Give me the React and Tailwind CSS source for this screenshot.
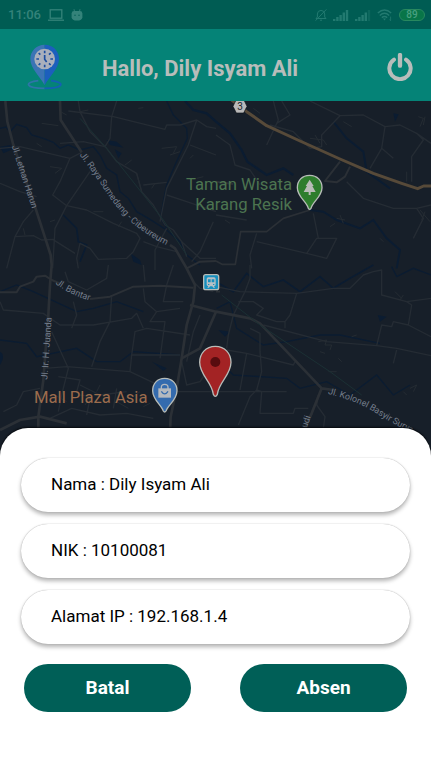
import React from "react";

function Laptop() {
  return (
    <svg className="h-3 w-4" viewBox="0 0 16 12" fill="none" stroke="currentColor" strokeWidth="1.3" aria-hidden="true">
      <rect x="2.2" y="0.8" width="11.6" height="8.4" />
      <path d="M0 11.2H16" />
    </svg>
  );
}

function Robot() {
  return (
    <svg className="h-3 w-3" viewBox="0 0 12 12" aria-hidden="true">
      <path d="M3 0.2 3.6 3M9 0.2 8.4 3" stroke="currentColor" strokeWidth="0.9" />
      <path d="M0.6 4.4Q0.8 2 3 2H9Q11.2 2 11.4 4.4V8.5Q11 11.6 6 11.6T0.6 8.5Z" fill="currentColor" />
      <circle cx="4" cy="6.2" r="0.7" fill="#005c53" />
      <circle cx="8" cy="6.2" r="0.7" fill="#005c53" />
    </svg>
  );
}

function BellOff() {
  return (
    <svg className="h-3 w-3" viewBox="0 0 12 12" fill="none" stroke="currentColor" strokeWidth="1" aria-hidden="true">
      <path d="M1 9.5H11L9.7 8V5Q9.7 1.6 6 1.4Q2.4 1.6 2.4 5V8ZM5 11.2H7M0.6 11.6 11.4 0.4" />
    </svg>
  );
}

function Signal({ last }) {
  return (
    <svg className="h-3 w-4" viewBox="0 0 16 12" fill="currentColor" aria-hidden="true">
      <rect x="0" y="10" width="2.4" height="2" />
      <rect x="3.2" y="8" width="2.4" height="4" />
      <rect x="6.4" y="6" width="2.4" height="6" />
      <rect x="9.6" y="3.5" width="2.4" height="8.5" />
      <rect x="12.8" y="1" width="2.4" height="11" opacity={last ? 0.35 : 1} />
    </svg>
  );
}

function Wifi() {
  return (
    <svg className="h-3 w-4" viewBox="0 0 16 12" fill="none" stroke="currentColor" strokeWidth="1.4" aria-hidden="true">
      <path d="M0.8 4Q7.5-2 14.2 4M2.8 6.4Q7.5 2.2 12.2 6.4M4.8 8.6Q7.5 6.4 10.2 8.6" />
      <path d="M6 9.6H9L7.5 11.4Z" fill="currentColor" stroke="none" />
      <path d="M13.6 7.6V11.6M12.6 10.5 13.6 11.8" strokeWidth="0.8" />
    </svg>
  );
}

function StatusBar() {
  return (
    <div className="flex h-[29px] items-center justify-between bg-[#005c53] pl-2 pr-[6px] text-[#34837a]">
      <div className="flex items-center gap-[7px]">
        <span className="text-[13px] font-medium leading-4">11:06</span>
        <Laptop />
        <Robot />
      </div>
      <div className="flex items-center gap-[6px] text-[#227a70]">
        <BellOff />
        <Signal />
        <Signal last />
        <Wifi />
        <span className="flex h-3 w-[26px] items-center justify-center rounded-full border border-[#28885f] bg-[#087548] text-[10px] font-medium leading-3 text-[#48a080]">
          89
        </span>
      </div>
    </div>
  );
}

function Logo() {
  return (
    <svg className="mt-1 h-[46px] w-9" viewBox="0 0 108 138" aria-hidden="true">
      <path d="M34 110C-10 114-6 133 53 133" fill="none" stroke="#2f74a8" strokeWidth="5" />
      <path d="M72 110C116 114 112 133 53 133" fill="none" stroke="#1460b4" strokeWidth="5" />
      <path d="M53 2C27 2 10 22 10 45C10 74 40 98 53 124Z" fill="#3b74b5" />
      <path d="M53 2C80 2 96 22 96 45C96 74 66 98 53 124Z" fill="#1c5fbd" />
      <circle cx="53" cy="45" r="31" fill="#a9afbc" />
      <g stroke="#1b4da0" strokeWidth="5">
        <path d="M53 20V28M53 62V70M28 45H36M70 45H78" />
        <path d="M35 27 40 32M66 58 71 63M71 27 66 32M40 58 35 63" />
        <path d="M53 33V46L59 54" fill="none" />
      </g>
    </svg>
  );
}

function Header() {
  return (
    <header className="flex h-[72px] items-center bg-[#058377] pl-[27px] pr-[17px] text-[#b8bdbb]">
      <Logo />
      <h1 className="ml-[39px] mt-2 flex-1 text-[22px] font-bold leading-7">Hallo, Dily Isyam Ali</h1>
      <button type="button" aria-label="Keluar" className="mt-1 flex h-7 w-7 items-center justify-center">
        <svg className="h-7 w-7" viewBox="0 0 84 84" fill="none" stroke="currentColor" strokeLinecap="round" aria-hidden="true">
          <path d="M24 20A32 32 0 1 0 60 20" strokeWidth="12" />
          <path d="M42 6V38" strokeWidth="13" />
        </svg>
      </button>
    </header>
  );
}

function Map() {
  return (
    <svg
      className="block w-full"
      viewBox="0 18 1293 1077"
      role="img"
      aria-label="Peta lokasi"
    >
      <defs>
        <path id="sumedang" d="M238 180Q276 228 306 272Q340 330 388 376Q440 424 520 460" />
        <path id="kolonel" d="M983 896Q1070 918 1118 948Q1170 982 1250 1022" />
        <path id="bantar" d="M166 566Q208 598 272 618" />
      </defs>
      <rect y="18" width="1293" height="1077" fill="#171f29" />

      <g fill="none" stroke="#0b1c31" strokeWidth="4">
        <path d="M0 100 18 96 30 110 50 88 80 98 95 120 130 130 160 142 180 160 205 150 240 165 280 155 300 180 320 220 350 240 360 290 385 310 410 350 445 370 500 405 540 440 560 480 600 510" />
        <path d="M500 18 520 60 560 100 562 130 525 210 500 270 490 320 482 370 500 400" />
        <path d="M555 18 580 45 620 55 648 80 690 115 725 165 742 200 800 240 850 220 880 240" strokeWidth="7" />
        <path d="M1000 80 1040 130 1090 170 1100 230 1170 280M930 345 970 350 1010 375 1080 400 1120 375 1160 430 1200 465 1190 520" strokeWidth="6" />
        <path d="M190 360 230 400 235 440 260 450 240 500M648 560 700 590 740 535 790 575 850 555 900 590 960 545 1000 580 1050 550 1120 510" strokeWidth="5" />
        <path d="M1175 515 1190 545 1240 520 1293 540M0 590 50 570 100 590 230 650 280 640 350 620 430 650M0 735 80 745 110 785 230 760 290 800 360 800 400 770 540 780" />
        <path d="M650 640 690 620 710 700 790 750 860 740 960 720 1020 720 1140 745M660 800 700 840 860 850 900 880 980 860 1050 900 1130 840 1180 900 1230 870" />
      </g>
      <g fill="#0b1c31">
        <path d="M0 155 30 150 38 163 10 175ZM320 135 350 140 370 158 330 150ZM344 163 365 175 355 190ZM392 475 420 495 425 510 400 500ZM0 770Q18 780 0 810ZM1180 55 1196 58 1185 80ZM456 800 500 820 490 828ZM655 705 690 710 675 725ZM1133 660 1160 665 1140 680Z" />
      </g>

      <g fill="none" stroke="#252c34" strokeWidth="4" strokeLinejoin="round">
        <path d="M235 18 240 50 270 110 320 160 350 200 410 235 425 290 460 330 495 390 520 405 545 440 560 485" />
        <path d="M205 48 340 65 495 103 500 90 540 90 590 75 620 95 648 100M350 18 335 65 330 130 315 155 250 140 180 145" />
        <path d="M0 160 60 155 210 190 245 172M210 190 180 260 158 300 200 332 260 345 340 385 410 415 420 430 400 470 380 490 295 493 270 460 240 445 230 490 235 520" />
        <path d="M270 230 200 332 165 400 158 520M0 265 60 290 110 305M100 345 70 380 45 425 20 520M45 425 100 422 125 435 158 433 225 475" />
        <path d="M590 75 565 150 500 280 480 380M648 180 570 150M500 300 560 320 648 350M640 380 600 470 575 500M430 440 470 455 530 470M500 400 465 465 465 525" />
        <path d="M430 270 500 262M410 235 425 290M545 440 600 490 648 490" />
        <path d="M820 18 835 75 800 150M845 18 870 60 830 85 M1020 62 965 120 965 155 930 160 880 110 810 90 M930 18 1020 62 1090 60 1155 95 1200 90 1250 115 1293 145M1155 95 1145 160 1110 220M1145 160 1180 190M1250 115 1270 135 1235 185 1235 260" />
        <path d="M648 120 690 150 705 210 750 225 780 270M1040 260 1090 310 1180 340 1250 340 1293 330M1250 340 1270 370 1240 430" />
        <path d="M770 415 750 480 755 520M770 440 920 475 950 430 1010 430 980 490 920 475M940 355 945 380 955 430M648 360 740 375" />
        <path d="M195 530 205 560 260 585 320 550 325 510M220 620 230 660 215 700M0 620 10 645 130 655 180 690 280 690 395 670 410 655 430 700M335 600 330 680 300 740 275 815M155 710 205 820 185 900 175 950M430 510 435 560M430 580 435 620 470 650 540 640" />
        <path d="M135 820 200 815 390 830 485 875 510 870M390 830 395 780 405 710 440 700 570 720M470 650 450 680 495 680 480 790M520 510 500 570 490 620 550 620M395 780 440 780 540 780M600 660 580 710 560 800 M545 800 560 870 600 860 620 830M500 890 640 890 860 890" />
        <path d="M750 510 750 550 735 590 700 660 685 720 680 760M648 575 720 590 890 595 1000 580 1050 580 1090 540 1120 530 1145 525 1145 600 1220 620 1293 610M715 620 760 620 790 640 770 660 830 680 855 680 870 660 890 595M855 680 855 700" />
        <path d="M790 690 980 740 1130 752 1190 760 1293 782M1130 752 1145 690 1175 695 1180 680 1225 690 1293 725M1225 690 1235 630 1220 620M680 765 740 775 880 810 885 800M750 700 780 715 780 770 785 830 770 885 750 905 715 990M740 775 720 885M770 885 785 890 780 955 880 955 885 940 925 940M955 900 950 930 975 965 970 1000M1190 765 1180 805" />
        <path d="M175 845 240 855 230 890M240 870 300 900 380 890M120 880 70 890 50 930 10 950M150 970 215 940 300 960 380 955 460 970M270 910 260 960M350 880 340 940M580 560 600 580 640 590" />
      </g>

      <g fill="none" stroke="#252c33" strokeWidth="3">
        <path d="M125 85 175 92M185 52 200 60M265 45 240 50M415 40 430 38M110 145 125 155M150 215 185 220 165 235M485 160 530 155 520 175M510 180 540 170M570 190 580 180M590 250 610 245M375 210 395 195M455 280 465 265M150 380 165 375M70 400 75 420M280 350 310 350M355 395 365 380" />
        <path d="M1255 65 1270 70 1260 95M1275 65 1270 90M930 130 970 135 980 150M945 120 960 145M1030 80 1055 95M675 375 690 385M990 395 1005 385M1010 370 1035 375M1020 360 1030 385M1220 230 1220 260M1260 345 1290 380M1275 350 1265 375M1140 430 1150 440M760 40 780 55" />
        <path d="M955 740 980 735 975 750 995 750 990 765M960 770 975 775M1015 790 1025 800M1210 600 1200 615M1185 590 1205 610M1230 880 1250 870 1240 890M1210 890 1220 900M985 830 1010 830M1055 725 1070 720M240 900 270 905 255 930M300 870 290 890M400 905 420 890M165 900 200 920M430 935 450 925M350 920 385 940" />
      </g>

      <g fill="none" stroke="#2b3036" strokeWidth="8" strokeLinejoin="round">
        <path d="M16 18 22 80 40 150 105 335 152 480 155 510 150 570 145 660 130 855 115 965 115 1010" />
        <path d="M180 18 182 75 245 172M510 450 525 460 560 520 585 570 580 620 560 690 545 790 530 880 512 965 510 1010" />
        <path d="M0 592 50 592 60 575 100 560 110 545 135 542 155 555 180 565M270 612 330 605 400 575 480 572 580 578M560 520 600 500 648 498M648 260 700 267" strokeWidth="6" />
        <path d="M648 590 660 590M648 498 666 508 706 508 722 410 800 410 850 370 930 345" strokeWidth="5" />
        <path d="M570 630 648 650 750 670 780 685 965 880 935 955 910 1010M965 880 1000 885M545 790 600 760 648 650M0 1005 60 975 120 965 200 985" />
        <path d="M1020 200 975 258 1010 262 1035 245 1050 215" strokeWidth="6" />
      </g>
      <path d="M240 70 320 160 490 375 560 480M665 600 780 690 990 830 1085 900" fill="none" stroke="#1b3034" strokeWidth="3" />
      <path d="M695 15 740 50 800 92 900 138 1020 192 1120 235 1205 265 1253 281 1271 273H1293" fill="none" stroke="#574a39" strokeWidth="9" strokeLinejoin="round" />

      <g fill="#747d8b" fontSize="27">
        <text transform="translate(35 154) rotate(72)">Jl. Letnan Harun</text>
        <text><textPath href="#sumedang">Jl. Raya Sumedang - Cibeureum</textPath></text>
        <text><textPath href="#bantar">Jl. Bantar</textPath></text>
        <text transform="translate(142 854) rotate(-86)">Jl. Ir. H. Juanda</text>
        <text><textPath href="#kolonel">Jl. Kolonel Basyir Surya</textPath></text>
        <text transform="translate(916 1014) rotate(-72)">audi</text>
      </g>

      <g fill="#4c7450" fontSize="50" textAnchor="end">
        <text x="876" y="286">Taman Wisata</text>
        <text x="876" y="345">Karang Resik</text>
      </g>
      <text x="102" y="924" fill="#9b6c4d" fontSize="50">Mall Plaza Asia</text>

      <path d="M709 13H731L741 34 731 54H709L699 34Z" fill="#b9b9b9" stroke="#0d1218" strokeWidth="2" />
      <text x="720" y="44" fill="#22272b" fontSize="30" textAnchor="middle">3</text>

      <g stroke="#b7bcb8" strokeWidth="4" strokeLinejoin="round">
        <path d="M929 241C906 241 892 257 892 278C892 305 920 320 925 340Q929 346 933 340C938 320 966 305 966 278C966 257 952 241 929 241Z" fill="#2e7d2d" />
        <path d="M494 850C472 850 458 866 458 887C458 914 484 930 490 948Q494 954 498 948C504 930 531 914 531 887C531 866 516 850 494 850Z" fill="#346bae" />
        <path d="M646 754C617 754 599 776 599 802C599 840 636 862 640 898Q646 910 652 898C656 862 693 840 693 802C693 776 675 754 646 754Z" fill="#a32324" />
        <rect x="611" y="539" width="45" height="45" rx="6" fill="#168fbe" />
      </g>
      <path d="M929 254 941 273H937L947 291H932V300H926V291H911L921 273H917Z" fill="#b9bcb8" />
      <path d="M475 880H513V908H475Z" fill="#b4b9bf" />
      <path d="M484 882V877Q484 868 494 868T504 877V882" fill="none" stroke="#b4b9bf" strokeWidth="4" />
      <path d="M484 889Q494 904 504 889" fill="none" stroke="#346bae" strokeWidth="4" />
      <circle cx="646" cy="801" r="15" fill="#580c0f" />
      <path d="M625 547H642Q647 547 647 552V569Q647 573 642 573L645 578H640L637 574H630L627 578H622L625 573Q620 573 620 569V552Q620 547 625 547Z" fill="#b7c0c5" />
      <path d="M624 553H632V562H624ZM635 553H643V562H635ZM624 567H628V570H624ZM639 567H643V570H639Z" fill="#168fbe" />
    </svg>
  );
}

const details = ["Nama : Dily Isyam Ali", "NIK : 10100081", "Alamat IP : 192.168.1.4"];
const action = "h-12 w-[167px] rounded-full bg-[#005f57] text-[19px] font-bold text-white";

function Sheet() {
  return (
    <section className="relative -mt-8 flex-1 rounded-t-[28px] bg-white px-[21px] pb-[54px] pt-[30px] shadow-[0_-1px_2px_#05080c]">
      <ul className="flex flex-col gap-3">
        {details.map((detail) => (
          <li
            key={detail}
            className="flex h-[54px] items-center rounded-full bg-white px-[30px] text-[17px] text-black shadow-[0_0_1px_#999,0_3px_4px_#b4b4b4]"
          >
            {detail}
          </li>
        ))}
      </ul>
      <div className="mt-5 flex justify-between px-[3px]">
        <button type="button" className={action}>Batal</button>
        <button type="button" className={action}>Absen</button>
      </div>
    </section>
  );
}

export default function App() {
  return (
    <main className="flex min-h-screen flex-col bg-[#171f29] font-[Roboto,sans-serif]">
      <StatusBar />
      <Header />
      <Map />
      <Sheet />
    </main>
  );
}
